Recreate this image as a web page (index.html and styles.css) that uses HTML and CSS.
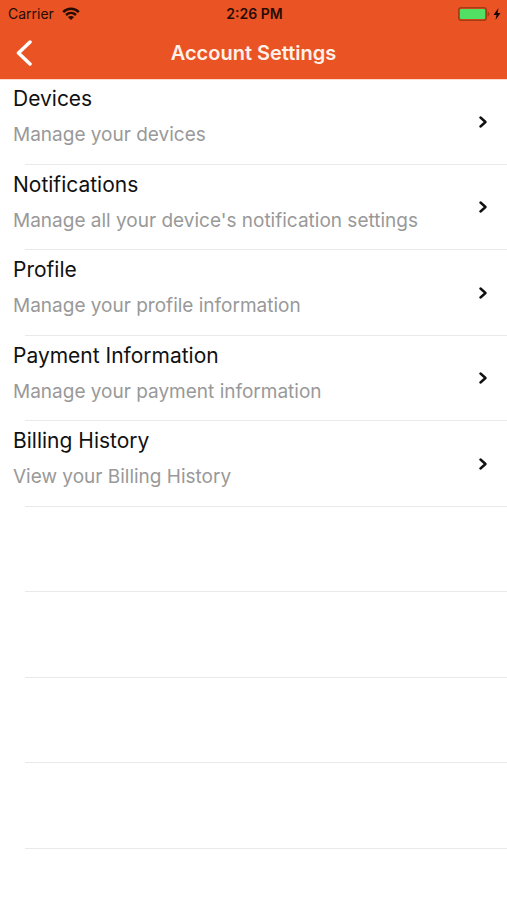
FILE: index.html
```html
<!DOCTYPE html>
<html lang="en">
<head>
<meta charset="utf-8">
<meta name="viewport" content="width=device-width, initial-scale=1">
<title>Account Settings</title>
<link rel="stylesheet" href="styles.css">
</head>
<body>
<header class="header">
  <div class="status">
    <div class="carrier">
      <span>Carrier</span>
      <svg class="wifi" viewBox="0 0 18 13" aria-hidden="true"><path d="M1.2 5.1C5.5.6 12.5.6 16.8 5.1M4 8c2.900-2.700 7.100-2.700 10 0"/><path class="solid" d="M5.900 10.100c1.800-1.500 4.400-1.500 6.200 0L9 13z"/></svg>
    </div>
    <time class="clock">2:26 PM</time>
    <div class="power">
      <svg class="battery" viewBox="0 0 32 14" aria-hidden="true"><rect class="case" x=".75" y=".75" width="27.5" height="12.5" rx="2.5"/><rect class="charge" x="2" y="2" width="25" height="10" rx="1"/><path class="cap" d="M29.500 4.500c2.500.5 2.500 4.500 0 5z"/></svg>
      <svg class="bolt" viewBox="0 0 8 12" aria-hidden="true"><path d="M5.500 0 .5 7h3L2.500 12l5-7h-3z"/></svg>
    </div>
  </div>
  <nav class="bar">
    <button class="back" type="button" aria-label="Back"><svg viewBox="0 0 16 26" aria-hidden="true"><path d="M14 2 2.500 13 14 24"/></svg></button>
    <h1>Account Settings</h1>
  </nav>
</header>
<main>
  <ul class="list">
    <li><a href="#devices"><span class="text"><span class="name">Devices</span><span class="detail">Manage your devices</span></span><svg class="chevron" viewBox="0 0 8 12" aria-hidden="true"><path d="m1.500 1.500 5 4.500-5 4.500"/></svg></a></li>
    <li><a href="#notifications"><span class="text"><span class="name">Notifications</span><span class="detail">Manage all your device's notification settings</span></span><svg class="chevron" viewBox="0 0 8 12" aria-hidden="true"><path d="m1.500 1.500 5 4.500-5 4.500"/></svg></a></li>
    <li><a href="#profile"><span class="text"><span class="name">Profile</span><span class="detail">Manage your profile information</span></span><svg class="chevron" viewBox="0 0 8 12" aria-hidden="true"><path d="m1.500 1.500 5 4.500-5 4.500"/></svg></a></li>
    <li><a href="#payment"><span class="text"><span class="name">Payment Information</span><span class="detail">Manage your payment information</span></span><svg class="chevron" viewBox="0 0 8 12" aria-hidden="true"><path d="m1.500 1.500 5 4.500-5 4.500"/></svg></a></li>
    <li><a href="#billing"><span class="text"><span class="name">Billing History</span><span class="detail">View your Billing History</span></span><svg class="chevron" viewBox="0 0 8 12" aria-hidden="true"><path d="m1.500 1.500 5 4.500-5 4.500"/></svg></a></li>
    <li></li>
    <li></li>
    <li></li>
    <li></li>
  </ul>
</main>
</body>
</html>
```
FILE: styles.css
```css
* { box-sizing: border-box; }

body {
  margin: 0;
  background: #fff;
  color: #111;
  font-family: Inter, "Liberation Sans", sans-serif;
}

svg {
  display: block;
  fill: none;
  stroke-linecap: round;
  stroke-linejoin: round;
}

.header {
  background: #ea5323;
  box-shadow: 0 1px #fbd9cb;
}

.status {
  display: grid;
  grid-template-columns: 1fr auto 1fr;
  align-items: center;
  height: 27px;
  padding: 0 6px 0 8px;
  color: #260c04;
  font-size: 14px;
  line-height: 16px;
}

.carrier,
.power {
  display: flex;
  align-items: center;
}

.carrier { gap: 8px; }
.power { justify-content: flex-end; gap: 3px; }
.clock { font-weight: 600; }

.wifi {
  width: 18px;
  height: 13px;
  stroke: #260c04;
  stroke-width: 2.4;
  stroke-linecap: butt;
}

.wifi .solid { fill: #260c04; stroke: none; }
.battery { width: 32px; height: 14px; }
.case { stroke: #a63c16; stroke-width: 1.5; }
.charge { fill: #51df64; }
.cap { fill: #a63c16; }
.bolt { width: 8px; height: 12px; fill: #160602; }

.bar {
  display: grid;
  grid-template-columns: 48px 1fr 48px;
  align-items: center;
  height: 52px;
}

.bar h1 {
  margin: 0;
  color: #fff1e9;
  font-size: 20px;
  font-weight: 600;
  line-height: 24px;
  text-align: center;
}

.back {
  padding: 8px 16px;
  border: 0;
  background: none;
}

.back svg {
  width: 16px;
  height: 26px;
  stroke: #fff;
  stroke-width: 3.5;
}

.list {
  margin: 0;
  padding: 0;
  list-style: none;
}

.list li {
  display: flex;
  flex-direction: column;
  height: 86px;
}

.list li:nth-child(even) { height: 85px; }

.list li::after {
  height: 1px;
  margin: auto 0 0 25px;
  background: #e9e9e9;
  content: "";
}

.list a {
  display: flex;
  flex: 1;
  align-items: center;
  justify-content: space-between;
  padding: 0 20px 0 13px;
  color: inherit;
  text-decoration: none;
}

.text {
  display: flex;
  flex-direction: column;
  align-self: flex-start;
  gap: 12px;
  padding-top: 8px;
}

.name { font-size: 21px; line-height: 24px; }
.detail { color: #999; font-size: 19px; line-height: 24px; }

.chevron {
  width: 8px;
  height: 12px;
  stroke: #111;
  stroke-width: 2.4;
}
```
